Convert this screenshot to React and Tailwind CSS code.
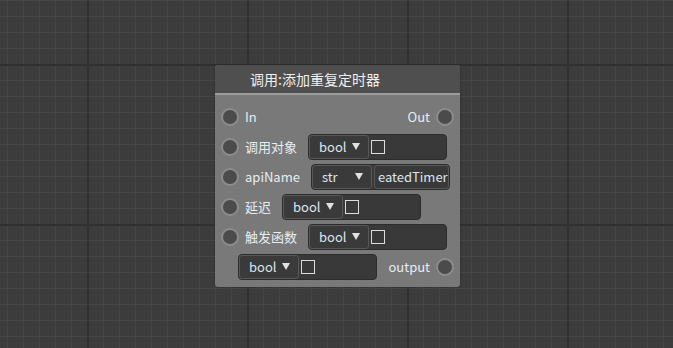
import React from 'react';

const Pin = () => (
    <div className="w-[18px] h-[18px] shrink-0 rounded-full bg-[#4b4b4b] border-2 border-[#8c8c8c]" />
);

const Select = ({ value }) => (
    <div className="w-[60px] h-full shrink-0 flex items-center justify-between pl-[9px] pr-[8px] border border-[#585858] rounded-[3px] bg-[#3a3a3a]">
        <span className="text-[13px] text-[#dbe6f0]">{value}</span>
        <svg width="8" height="7" viewBox="0 0 8 7" className="mb-[1px]">
            <path d="M0 0 L8 0 L4 7 Z" fill="#e2e2e2" />
        </svg>
    </div>
);

const Widget = ({ type = 'bool', text }) => (
    <div className="w-[139px] h-[26px] shrink-0 flex items-center gap-[2px] rounded-[4px] bg-[#393939] border border-[#2c2c2c]">
        <Select value={type} />
        {text ? (
            <div className="flex-1 h-full flex items-center pl-[3px] border border-[#585858] rounded-[3px] overflow-hidden">
                <span className="text-[13px] text-[#dbe6f0] whitespace-nowrap">{text}</span>
            </div>
        ) : (
            <div className="w-[14px] h-[14px] border border-[#dcdcdc]" />
        )}
    </div>
);

const InputRow = ({ label, type, text }) => (
    <div className="h-[30px] flex items-center pl-[6px]">
        <Pin />
        <span className="ml-[6px] mr-[11px] text-[13px] text-[#e6edf3]">{label}</span>
        <Widget type={type} text={text} />
    </div>
);

export default function App() {
    return (
        <div
            className="w-full h-[348px] overflow-hidden pt-[65px] pl-[215px] bg-[#3c3c3c] bg-[image:linear-gradient(to_right,#303030_2px,transparent_2px),linear-gradient(to_bottom,#303030_2px,transparent_2px),linear-gradient(to_right,#464646_1px,transparent_1px),linear-gradient(to_bottom,#464646_1px,transparent_1px)] bg-[size:160px_160px,160px_160px,16px_16px,16px_16px] bg-[position:87px_64px,87px_64px,7px_0px,7px_0px]"
            style={{ fontFamily: '"Noto Sans CJK SC", "Noto Sans", sans-serif' }}
        >
            <div className="w-[245px] rounded-[3px] overflow-hidden bg-[#797979] shadow-[0_0_2px_rgba(0,0,0,0.4)]">
                <div className="h-[30px] flex items-center pl-[35px] bg-[#4f4f4f] border-b-2 border-[#9c9c9c]">
                    <span className="text-[14px] text-[#f0f0f0]">调用:添加重复定时器</span>
                </div>
                <div className="pt-[7px] pb-[5px]">
                    <div className="h-[30px] flex items-center justify-between px-[6px]">
                        <div className="flex items-center gap-[6px]">
                            <Pin />
                            <span className="text-[13px] text-[#e6edf3]">In</span>
                        </div>
                        <div className="flex items-center gap-[6px]">
                            <span className="text-[13px] text-[#e6edf3]">Out</span>
                            <Pin />
                        </div>
                    </div>
                    <InputRow label="调用对象" />
                    <InputRow label="apiName" type="str" text="eatedTimer" />
                    <InputRow label="延迟" />
                    <InputRow label="触发函数" />
                    <div className="h-[30px] flex items-center justify-between pl-[23px] pr-[6px]">
                        <Widget />
                        <div className="flex items-center gap-[6px]">
                            <span className="text-[13px] text-[#e6edf3]">output</span>
                            <Pin />
                        </div>
                    </div>
                </div>
            </div>
        </div>
    );
}
